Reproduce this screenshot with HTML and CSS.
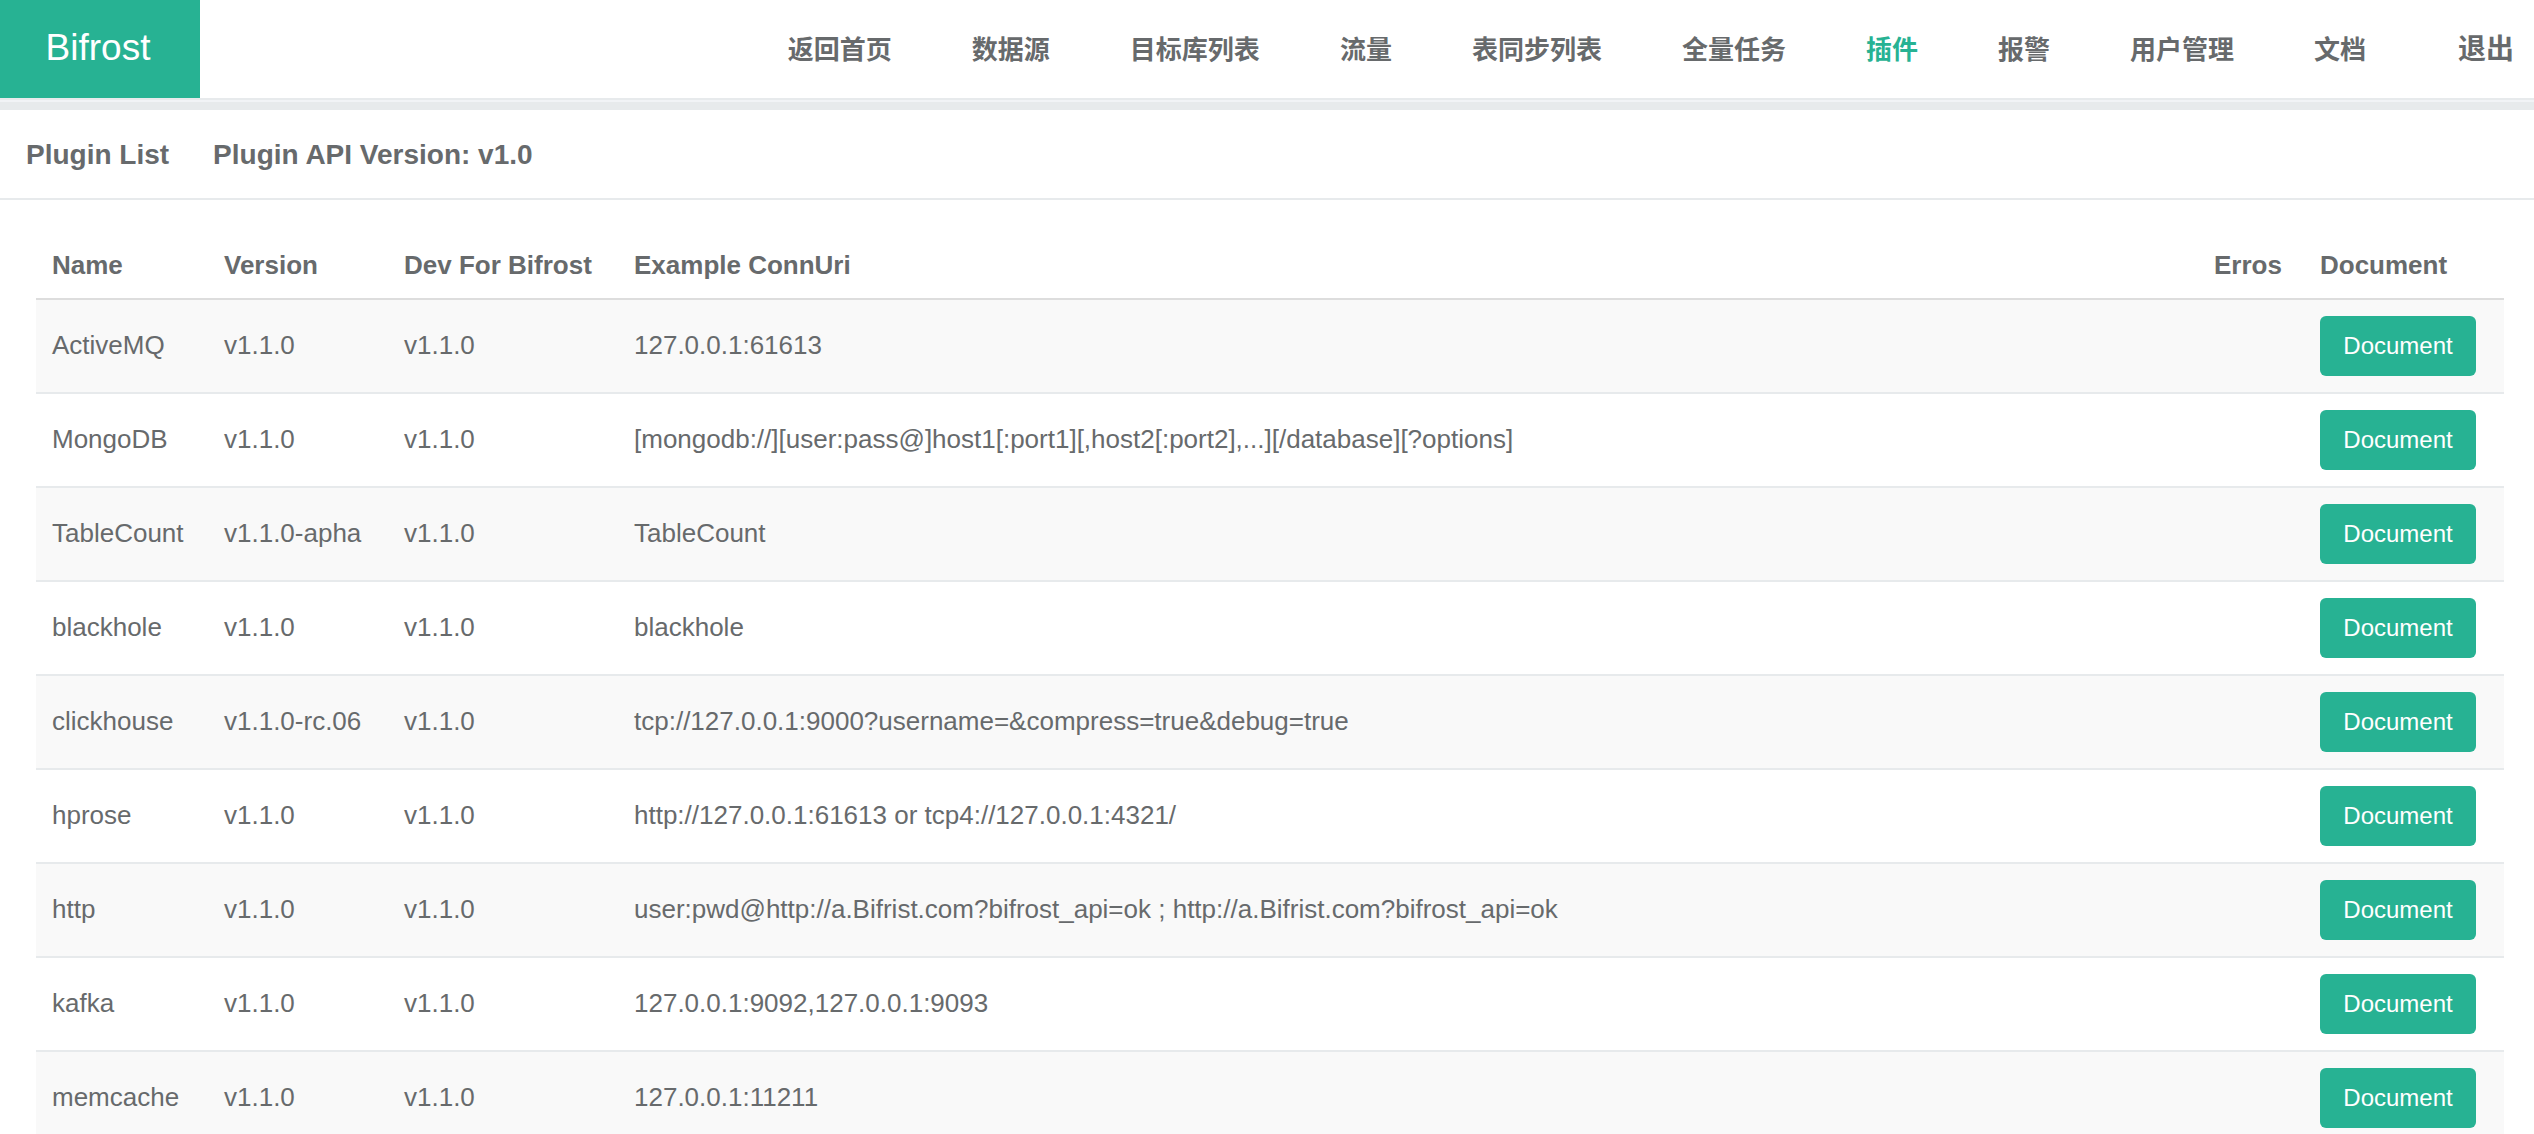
FILE: index.html
```html
<!DOCTYPE html>
<html lang="zh-CN">
<head>
<meta charset="utf-8">
<title>Bifrost</title>
<link rel="stylesheet" href="styles.css">
</head>
<body>
<header class="topbar">
  <a class="brand" href="#">Bifrost</a>
  <nav class="nav">
    <a class="nav-link" href="#">返回首页</a>
    <a class="nav-link" href="#">数据源</a>
    <a class="nav-link" href="#">目标库列表</a>
    <a class="nav-link" href="#">流量</a>
    <a class="nav-link" href="#">表同步列表</a>
    <a class="nav-link" href="#">全量任务</a>
    <a class="nav-link active" href="#">插件</a>
    <a class="nav-link" href="#">报警</a>
    <a class="nav-link" href="#">用户管理</a>
    <a class="nav-link" href="#">文档</a>
    <a class="nav-link logout" href="#">退出</a>
  </nav>
</header>
<main class="panel">
  <div class="panel-title">
    <h5>Plugin List</h5>
    <h5>Plugin API Version: v1.0</h5>
  </div>
  <div class="panel-content">
    <table class="plugins">
      <colgroup>
        <col class="col-name"><col class="col-version"><col class="col-dev"><col><col class="col-errors"><col class="col-doc">
      </colgroup>
      <thead>
        <tr><th>Name</th><th>Version</th><th>Dev For Bifrost</th><th>Example ConnUri</th><th>Erros</th><th>Document</th></tr>
      </thead>
      <tbody>
        <tr><td>ActiveMQ</td><td>v1.1.0</td><td>v1.1.0</td><td>127.0.0.1:61613</td><td></td><td><button class="btn" type="button">Document</button></td></tr>
        <tr><td>MongoDB</td><td>v1.1.0</td><td>v1.1.0</td><td>[mongodb://][user:pass@]host1[:port1][,host2[:port2],...][/database][?options]</td><td></td><td><button class="btn" type="button">Document</button></td></tr>
        <tr><td>TableCount</td><td>v1.1.0-apha</td><td>v1.1.0</td><td>TableCount</td><td></td><td><button class="btn" type="button">Document</button></td></tr>
        <tr><td>blackhole</td><td>v1.1.0</td><td>v1.1.0</td><td>blackhole</td><td></td><td><button class="btn" type="button">Document</button></td></tr>
        <tr><td>clickhouse</td><td>v1.1.0-rc.06</td><td>v1.1.0</td><td>tcp://127.0.0.1:9000?username=&amp;compress=true&amp;debug=true</td><td></td><td><button class="btn" type="button">Document</button></td></tr>
        <tr><td>hprose</td><td>v1.1.0</td><td>v1.1.0</td><td>http://127.0.0.1:61613 or tcp4://127.0.0.1:4321/</td><td></td><td><button class="btn" type="button">Document</button></td></tr>
        <tr><td>http</td><td>v1.1.0</td><td>v1.1.0</td><td>user:pwd@http://a.Bifrist.com?bifrost_api=ok ; http://a.Bifrist.com?bifrost_api=ok</td><td></td><td><button class="btn" type="button">Document</button></td></tr>
        <tr><td>kafka</td><td>v1.1.0</td><td>v1.1.0</td><td>127.0.0.1:9092,127.0.0.1:9093</td><td></td><td><button class="btn" type="button">Document</button></td></tr>
        <tr><td>memcache</td><td>v1.1.0</td><td>v1.1.0</td><td>127.0.0.1:11211</td><td></td><td><button class="btn" type="button">Document</button></td></tr>
      </tbody>
    </table>
  </div>
</main>
</body>
</html>
```
FILE: styles.css
```css
* {
  box-sizing: border-box;
}

body {
  margin: 0;
  background: #f1f3f6;
  color: #676a6c;
  font-family: "Liberation Sans", "Noto Sans CJK SC", sans-serif;
  font-size: 26px;
  line-height: 36px;
}

a {
  color: inherit;
  text-decoration: none;
}

.topbar {
  display: flex;
  justify-content: space-between;
  height: 100px;
  border-bottom: 2px solid #e7eaec;
  background: #fff;
}

.brand {
  display: flex;
  align-items: center;
  justify-content: center;
  width: 200px;
  padding: 0 4px 2px 0;
  background: #27b293;
  color: #fff;
  font-size: 37px;
}

.nav {
  display: flex;
  align-items: center;
  padding-top: 2px;
  font-weight: 600;
}

.nav-link {
  padding: 0 40px;
}

.nav-link.active {
  color: #27b293;
}

.logout {
  padding: 0 20px 0 52px;
  font-size: 28px;
}

.panel {
  margin-top: 2px;
  border-top: 8px solid #e7eaec;
  background: #fff;
}

.panel-title {
  display: flex;
  gap: 44px;
  height: 90px;
  padding: 27px 26px;
  border-bottom: 2px solid #e7eaec;
}

.panel-title h5 {
  margin: 0;
  font-size: 28px;
  font-weight: 600;
}

.panel-content {
  padding: 30px 30px 40px 36px;
}

.plugins {
  width: 100%;
  border-collapse: separate;
  border-spacing: 0;
  table-layout: fixed;
}

.col-name {
  width: 172px;
}

.col-version {
  width: 180px;
}

.col-dev {
  width: 230px;
}

.col-errors {
  width: 106px;
}

.col-doc {
  width: 200px;
}

.plugins th,
.plugins td {
  text-align: left;
  vertical-align: top;
  white-space: nowrap;
}

.plugins th {
  padding: 17px 16px 15px;
  border-bottom: 2px solid #ddd;
}

.plugins td {
  padding: 16px;
  border-bottom: 2px solid #e7eaec;
  line-height: 58px;
}

.plugins tbody tr:nth-child(odd) {
  background: #f9f9f9;
}

.btn {
  display: block;
  width: 156px;
  height: 60px;
  padding: 0;
  border: 0;
  border-radius: 6px;
  background: #27b293;
  color: #fff;
  font-family: inherit;
  font-size: 24px;
}
```
